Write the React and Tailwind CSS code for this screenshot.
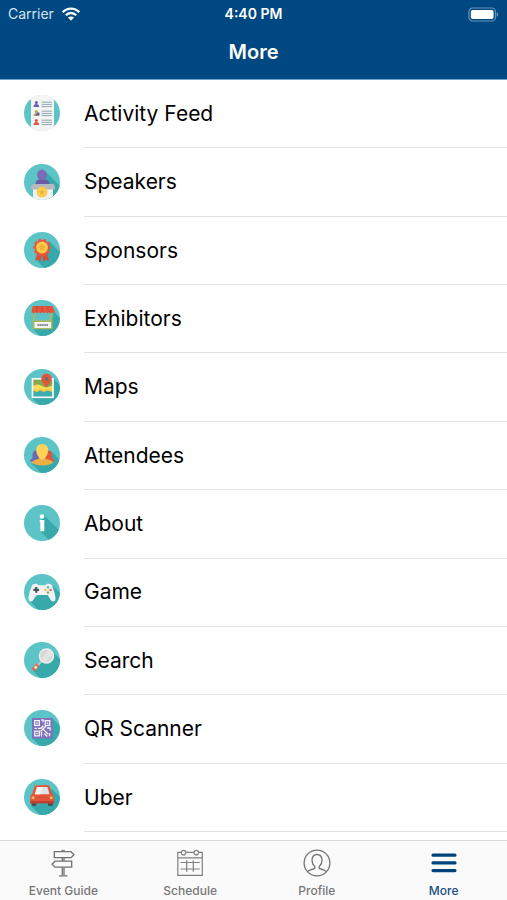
import React, { useId } from "react";

function Disc({ children, shadow }) {
  const id = useId();
  return (
    <svg viewBox="0 0 36 36" className="mb-0.5 size-9 shrink-0" aria-hidden="true">
      <clipPath id={id}>
        <circle cx="18" cy="18" r="18" />
      </clipPath>
      <g clipPath={`url(#${id})`}>
        <rect width="36" height="36" fill="#5cc4c6" />
        {shadow && <path d={shadow} fill="#38a9aa" />}
        {children}
      </g>
    </svg>
  );
}

function FeedIcon() {
  const people = [
    [9, "#6b5bb0"],
    [18, "#b5b04a"],
    [27, "#e2553d"],
  ];
  return (
    <Disc>
      <path d="M0 0H36V5H0zM0 32H36V36H0z" fill="#eeeeee" />
      <rect x="7" width="23" height="36" fill="#f4f4f4" />
      {people.map(([y, fill]) => (
        <g key={y}>
          <circle cx="12.3" cy={y - 1.4} r="1.5" fill={fill} />
          <path d={`M9.500 ${y + 3}q0-3 2.800-3t2.800 3z`} fill={fill} />
          <path d={`M17.500 ${y - 1.8}h10.500M17.500 ${y + 0.4}h10.500M17.500 ${y + 2.6}h10.500`} stroke="#8fa9b3" strokeWidth="1" />
        </g>
      ))}
      <path d="M11.500 20.500l1.500-3h2.500v3z" fill="#6b5bb0" />
    </Disc>
  );
}

function SpeakerIcon() {
  return (
    <Disc shadow="M21 7L36 22V36H24L14 18z">
      <path d="M11.500 20q0-4 4.600-4.800v-2h4v2Q25.500 16 25.500 20z" fill="#6d5aa5" />
      <ellipse cx="18" cy="10.800" rx="4.900" ry="5.400" fill="#7d69b7" />
      <path d="M9 25H29V36H9z" fill="#f0f1f2" />
      <path d="M8.500 20H29.500L31 22V25.500H7V22z" fill="#b3b9be" />
      <circle cx="18" cy="28" r="5.500" fill="#f9c845" />
      <circle cx="18" cy="28" r="3.800" fill="#fbd35c" />
      <path d="M18 24.800l1 2.100 2.200.3-1.600 1.500.4 2.300-2-1.100-2 1.100.4-2.300-1.600-1.500 2.200-.3z" fill="#efb53a" />
    </Disc>
  );
}

function RosetteIcon() {
  return (
    <Disc shadow="M25 9L36 20V36H20L13 29z">
      <path d="M13.500 20L11 28.700L14.200 27.800L16.300 29.800L18.500 21zM22.500 20L25 28.700L21.800 27.800L19.700 29.800L17.500 21z" fill="#d94d36" />
      <g fill="#e9573d">
        <circle cx="18" cy="15.500" r="7.500" />
        <circle cx="18" cy="15.500" r="7.400" fill="none" stroke="#e9573d" strokeWidth="3.200" strokeLinecap="round" strokeDasharray="0.100 4.550" />
      </g>
      <circle cx="18" cy="15.500" r="5.900" fill="#fbcb4d" />
      <path d="M18 11.500l1.300 2.500 2.700.4-2 1.900.5 2.800-2.500-1.400-2.500 1.400.5-2.800-2-1.900 2.700-.4z" fill="#eeb238" />
    </Disc>
  );
}

function BoothIcon() {
  return (
    <Disc shadow="M30 12L36 18V36H16L9 29L27 24z">
      <path d="M10 12V24M26.700 12V24" stroke="#b2b35a" strokeWidth="2" />
      <rect x="9" y="20.500" width="19.500" height="8.700" fill="#b6b458" />
      <rect x="10.500" y="22" width="16.500" height="6" fill="#f2f2f0" />
      <path d="M13.500 25h10.500" stroke="#839198" strokeWidth="1.800" strokeDasharray="1.600 .3" />
      <path d="M8.700 6H28.500L31 12q-1.300 2.400-3 0q-1.500 2.400-3.300 0q-1.500 2.400-3.300 0q-1.600 2.400-3.300 0q-1.600 2.400-3.300 0q-1.600 2.400-3.300 0q-1.600 2.400-4 0z" fill="#e4533c" />
      <path d="M13.500 6l-1.200 6M18.300 6v6M23.500 6l1.200 6" stroke="#d34936" strokeWidth="1.300" />
    </Disc>
  );
}

function MapIcon() {
  return (
    <Disc shadow="M30 10L36 16V36H15L8 29z">
      <rect x="8.500" y="9.800" width="20.500" height="18.500" fill="#87a84e" />
      <path d="M9 17q5-3 9 0t11-1V22H9z" fill="#fbdc55" />
      <path d="M9 21.500l4 2 3-2.200 4 2.200 3-2.200 6 2.200V28H9z" fill="#3aadb0" />
      <path d="M9 20l4 2.400 3-2.200 4 2.200 3-2.200 6 2.200" fill="none" stroke="#f0ca48" strokeWidth="1.600" />
      <rect x="8.500" y="9.800" width="20.500" height="18.500" fill="none" stroke="#f7f7f7" strokeWidth="1.700" />
      <path d="M22.500 18.500C20 14.800 17.300 12.800 17.300 9.800a5.200 5.200 0 0 1 10.400 0c0 3-2.700 5-5.200 8.700z" fill="#e4533c" />
      <circle cx="22.500" cy="9.800" r="1.900" fill="#60727a" />
    </Disc>
  );
}

function AttendeesIcon() {
  return (
    <Disc shadow="M27 14L36 23V36H17L8 27z">
      <path d="M6 24.500q0-2.500 2.700-3.500q-1-7.300 3-7.500q4 0 3.800 5v6z" fill="#6f66ae" />
      <path d="M30.500 24.500q0-2.500-2.700-3.500q1-7.300-3-7.500q-4 0-3.800 5v6z" fill="#e65339" />
      <path d="M8 26q.5-3 7-4.200h6.500Q28.500 23 29 26q-4.500 2.500-10.500 2.500T8 26z" fill="#ebb043" />
      <path d="M15.500 18h5v5q-2.500 2-5 0z" fill="#efb545" />
      <path d="M12.200 13.500q0-6.500 6-6.500t6 6.500q0 3.500-2.700 7.200q-3.300 3.400-6.600 0q-2.700-3.700-2.700-7.200z" fill="#fbd25a" />
    </Disc>
  );
}

function AboutIcon() {
  return (
    <Disc shadow="M20 10L36 26V36H26L16 26L18 13z">
      <circle cx="18" cy="11.500" r="2.300" fill="#ffffff" />
      <path d="M15.700 15H20.300V26.300H16.300V17H15.700z" fill="#ffffff" />
    </Disc>
  );
}

function GameIcon() {
  return (
    <Disc shadow="M29 12L36 19V36H14L6 27z">
      <path d="M8 11.500Q9 9.800 11 9.800h2l1.500 1.400h7L23 9.800h2q2 0 3 1.700q2.800 6.500 3.500 12q.2 4-2.200 4q-1.500 0-2.500-1.500L23.700 21H12.300L9.200 26q-1 1.500-2.500 1.500q-2.400 0-2.200-4q.7-5.500 3.500-12z" fill="#f2f2f2" />
      <path d="M12.200 13v5.800M9.300 15.900h5.800" stroke="#485259" strokeWidth="2.100" />
      <circle cx="24" cy="13.300" r="1.200" fill="#4eb9ba" />
      <circle cx="21.400" cy="15.900" r="1.200" fill="#f1b942" />
      <circle cx="26.600" cy="15.900" r="1.200" fill="#e95841" />
      <circle cx="24" cy="18.500" r="1.200" fill="#8d9f54" />
    </Disc>
  );
}

function SearchIcon() {
  return (
    <Disc shadow="M28 9L36 17V36H16L9 29z">
      <path d="M18 19L13.500 23.500" stroke="#c0c8ca" strokeWidth="1.800" />
      <path d="M14 23L9 28" stroke="#dd6844" strokeWidth="4" />
      <path d="M12.700 24.300L10.700 26.300" stroke="#edf0f0" strokeWidth="2.600" />
      <circle cx="22.500" cy="14" r="7" fill="#d5d7d6" stroke="#efeeec" strokeWidth="1.500" />
      <path d="M17.700 16.500L24.500 8Q28 9.500 28.400 13L22 19.800Q19 19.300 17.700 16.500z" fill="#e3e3e2" />
    </Disc>
  );
}

function QrIcon() {
  return (
    <Disc shadow="M28 8L36 16V36H16L8 28z">
      <rect x="8" y="8" width="20.500" height="20.500" fill="#8070bd" />
      <g fill="none" stroke="#f5f4fa" strokeWidth="1.300">
        <path d="M10.700 10.700h4.600v4.600h-4.600zM21.200 10.700h4.600v4.600h-4.600zM10.700 21.200h4.600v4.600h-4.600z" />
        <path d="M17.300 10h1.800v2.200M10.500 18.300h2.500M14 18.300h2.800l2.600-2.600M16.500 21.500l5.500-5.500M19 19l5 5M17.500 22v4.500M20.300 23.500l3 3M23 18h3.200v2.500M25.500 23v3.200" />
      </g>
      <path d="M12.300 12.300h1.500v1.500h-1.500zM22.800 12.300h1.500v1.500h-1.500zM12.300 22.800h1.500v1.500h-1.500z" fill="#f5f4fa" />
    </Disc>
  );
}

function CarIcon() {
  return (
    <Disc shadow="M28 10L36 18V36H16L7 27z">
      <path d="M7.500 23h4.800v3.800H8.500q-1 0-1-1zM24 23h4.800v2.800q0 1-1 1H24z" fill="#49484d" />
      <path d="M10.500 7.500Q11 6.200 12.500 6.200h11.300q1.500 0 2 1.300L28 15q2 1.200 2 3v6.300H6.200V18q0-1.800 2-3z" fill="#e65339" />
      <path d="M6.200 22H30v2.300H6.200z" fill="#bd3f31" />
      <path d="M12.700 8h10.800l1.900 7.300H10.800z" fill="#e0e3e5" />
      <path d="M14 8h5l-3 7.300h-5.200z" fill="#f4f5f5" />
      <path d="M12 18.500h12.300" stroke="#d64c34" strokeWidth="1" />
      <circle cx="9" cy="18.800" r="1.500" fill="#fbc158" />
      <circle cx="27.200" cy="18.800" r="1.500" fill="#fbc158" />
    </Disc>
  );
}

const items = [
  ["Activity Feed", FeedIcon],
  ["Speakers", SpeakerIcon],
  ["Sponsors", RosetteIcon],
  ["Exhibitors", BoothIcon],
  ["Maps", MapIcon],
  ["Attendees", AttendeesIcon],
  ["About", AboutIcon],
  ["Game", GameIcon],
  ["Search", SearchIcon],
  ["QR Scanner", QrIcon],
  ["Uber", CarIcon],
];

function WifiIcon() {
  return (
    <svg viewBox="0 0 18 14" className="h-3.5 w-[18px]" fill="none" stroke="white" strokeWidth="2.300" aria-hidden="true">
      <path d="M.8 5.200Q4.300 1.600 9 1.600t8.200 3.600" />
      <path d="M3.800 8.300Q6 6 9 6t5.200 2.300" />
      <path d="M9 13.800L5.900 10.600Q9 8.200 12.100 10.600z" fill="white" stroke="none" />
    </svg>
  );
}

function BatteryIcon() {
  return (
    <svg viewBox="0 0 31 15" className="h-[15px] w-[31px]" aria-hidden="true">
      <rect x=".9" y="1" width="26.600" height="13" rx="3.800" fill="none" stroke="#6b94bb" strokeWidth="1.200" />
      <rect x="2.800" y="3" width="22.800" height="9" rx="2" fill="white" />
      <path d="M28.700 5.300q1.600.7 1.600 2.200t-1.600 2.200z" fill="#6b94bb" />
    </svg>
  );
}

function SignpostIcon() {
  return (
    <svg viewBox="0 0 28 28" className="size-7" fill="none" stroke="#707070" strokeWidth="1.300" aria-hidden="true">
      <path d="M5.300 2.700H22L25 5.700L22 8.700H5.300zM22.700 12.200H6L3 15.200L6 18.200H22.700z" />
      <path d="M13.300 .8V2.500M15 .8V2.500M13.300 9V12M15 9V12M13.300 18.500V26M15 18.500V26M10 26.800H18.500" />
    </svg>
  );
}

function CalendarIcon() {
  return (
    <svg viewBox="0 0 28 28" className="size-7" fill="none" stroke="#808080" strokeWidth="1.200" aria-hidden="true">
      <path d="M5.300 3.300H1.800V26.300H26.300V3.300H22.500M10 3.300H18M1.800 8.800H26.300" />
      <circle cx="7.600" cy="3.600" r="2.300" />
      <circle cx="20.300" cy="3.600" r="2.300" />
      <path d="M4.500 13.500H23.700M4.500 20H23.700M10.700 11.300V22.800M17.300 11.300V22.800" />
    </svg>
  );
}

function ProfileIcon() {
  return (
    <svg viewBox="0 0 28 28" className="size-7" fill="none" stroke="#747474" strokeWidth="1.300" aria-hidden="true">
      <circle cx="14" cy="14" r="12.900" />
      <path d="M4.500 22.500Q7 20.700 11.500 19.500Q12.500 18.500 11.300 17Q8.900 14.500 9 11q.3-5.500 5-5.500t5 5.500q.1 3.500-2.300 6q-1.200 1.500-.2 2.500q4.500 1.200 7 3" />
    </svg>
  );
}

function MenuIcon() {
  return (
    <svg viewBox="0 0 28 28" className="size-7" stroke="#00437c" strokeWidth="3.200" strokeLinecap="round" aria-hidden="true">
      <path d="M3 6.200H25M3 13.900H25M3 21.600H25" />
    </svg>
  );
}

const tabs = [
  ["Event Guide", SignpostIcon],
  ["Schedule", CalendarIcon],
  ["Profile", ProfileIcon],
  ["More", MenuIcon],
];

export default function App() {
  return (
    <div className="flex h-screen min-h-[640px] flex-col bg-white font-['Inter','Liberation_Sans',sans-serif] text-black">
      <header className="shrink-0 border-b border-[#6fa3cc] bg-[#004881] text-white">
        <div className="grid h-7 grid-cols-3 items-center px-2">
          <div className="flex items-center gap-2 text-sm text-[#d5e3f0]">
            Carrier
            <WifiIcon />
          </div>
          <time className="text-center text-sm font-semibold">4:40 PM</time>
          <div className="flex justify-end">
            <BatteryIcon />
          </div>
        </div>
        <h1 className="h-[51px] pt-2 text-center text-xl leading-8 font-semibold">More</h1>
      </header>

      <main className="min-h-0 flex-1 overflow-hidden pb-2">
        <ul className="flex h-full flex-col">
          {items.map(([label, Icon]) => (
            <li key={label} className="min-h-0 flex-1">
              <a href="#" className="flex h-full items-center gap-6 pl-6">
                <Icon />
                <span className="flex h-full flex-1 items-center border-b border-[#e3e3e3] text-[21px]">
                  {label}
                </span>
              </a>
            </li>
          ))}
        </ul>
      </main>

      <nav className="grid h-15 shrink-0 grid-cols-4 border-t border-[#d9d9d9] bg-[#fafafa]">
        {tabs.map(([label, Icon]) => (
          <button
            key={label}
            type="button"
            aria-current={label === "More" ? "page" : undefined}
            className={`flex flex-col items-center gap-1 pt-2 text-xs leading-5 font-medium ${
              label === "More" ? "text-[#164f84]" : "text-[#777777]"
            }`}
          >
            <Icon />
            {label}
          </button>
        ))}
      </nav>
    </div>
  );
}
